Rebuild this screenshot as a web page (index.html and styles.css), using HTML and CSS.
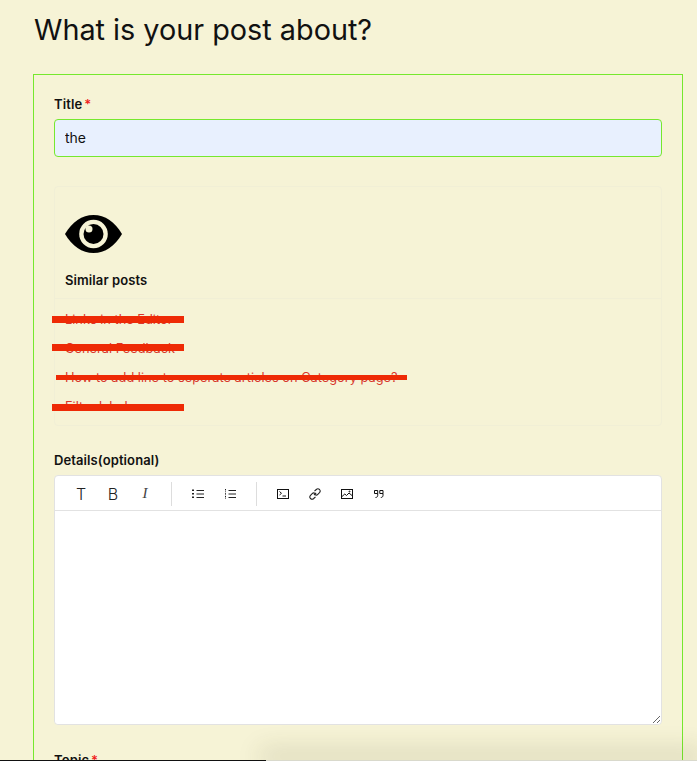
FILE: index.html

```html
<!DOCTYPE html>
<html lang="en">
<head>
    <meta charset="UTF-8">
    <title>New post</title>
    <link rel="stylesheet" href="styles.css">
</head>
<body>
    <h1 class="page-title">What is your post about?</h1>

    <form class="post-form">
        <div class="field">
            <label class="field-label">Title<span class="req">*</span></label>
            <input class="title-input" type="text" value="the">
        </div>

        <div class="similar">
            <div class="similar-head">
                <svg class="eye" viewBox="0 0 57 38" width="57" height="38">
                    <path fill="#000" d="M0 19C7 7 17 0 28.500 0S50 7 57 19C50 31 40 38 28.500 38S7 31 0 19Z"/>
                    <circle cx="28.500" cy="19" r="14.300" fill="#f6f3d6"/>
                    <circle cx="28.500" cy="19" r="10" fill="#000"/>
                    <circle cx="24" cy="14" r="3.500" fill="#f6f3d6"/>
                </svg>
                <div class="similar-title">Similar posts</div>
            </div>
            <ul class="similar-list">
                <li>Links in the Editor<span class="strike strike-short"></span></li>
                <li>General Feedback<span class="strike strike-short"></span></li>
                <li>How to add line to seperate articles on Category page?<span class="strike strike-long"></span></li>
                <li>Filter label<span class="strike strike-short"></span></li>
            </ul>
        </div>

        <div class="field">
            <label class="field-label">Details(optional)</label>
            <div class="editor">
                <div class="toolbar">
                    <div class="tool-group">
                        <span class="tool tool-letter">T</span>
                        <span class="tool tool-letter">B</span>
                        <span class="tool tool-letter tool-italic">I</span>
                    </div>
                    <div class="tool-group">
                        <span class="tool">
                            <svg viewBox="0 0 12 12" width="12" height="12" fill="none" stroke="#222" stroke-width="1">
                                <path d="M4.500 2.500H12M4.500 6H12M4.500 9.500H12"/>
                                <path stroke-width="2" stroke-dasharray="1.400 .9" d="M1 1.500V3.500M1 5V7M1 8.500V10.500"/>
                            </svg>
                        </span>
                        <span class="tool">
                            <svg viewBox="0 0 12 12" width="12" height="12" fill="none" stroke="#222" stroke-width="1">
                                <path d="M4.500 2.500H12M4.500 6H12M4.500 9.500H12"/>
                                <path stroke-dasharray="1 .6" d="M1.500 1V4M1.500 4.800V7.200M1.500 8V11"/>
                            </svg>
                        </span>
                    </div>
                    <div class="tool-group">
                        <span class="tool">
                            <svg viewBox="0 0 12 10" width="12" height="10" fill="none" stroke="#111" stroke-width="1">
                                <rect x=".5" y=".5" width="11" height="9"/>
                                <path d="M2.500 2.500L4.500 4.300L2.500 6M5.500 7H9"/>
                            </svg>
                        </span>
                        <span class="tool">
                            <svg viewBox="0 0 12 12" width="12" height="12" fill="none" stroke="#222" stroke-width="1.100">
                                <path d="M5 7L7.200 4.800"/>
                                <path d="M5.500 3.200L7.300 1.500C8.200.7 9.600.7 10.500 1.500C11.300 2.400 11.300 3.800 10.500 4.700L8.800 6.400C8 7.200 6.800 7.200 6 6.500"/>
                                <path d="M6.500 8.800L4.700 10.500C3.800 11.300 2.400 11.300 1.500 10.500C.7 9.600.7 8.200 1.500 7.300L3.200 5.600C4 4.800 5.200 4.800 6 5.500"/>
                            </svg>
                        </span>
                        <span class="tool">
                            <svg viewBox="0 0 12 10" width="12" height="10" fill="none" stroke="#111" stroke-width="1">
                                <rect x=".5" y=".5" width="11" height="9"/>
                                <path d="M1 7.500L3.800 5L5.500 6.500L8 4L11 6.500"/>
                                <circle cx="8.500" cy="2.500" r=".5"/>
                            </svg>
                        </span>
                        <span class="tool">
                            <svg viewBox="0 0 10 8" width="10" height="8" fill="none" stroke="#111" stroke-width="1">
                                <path d="M.5.500H3.700V3.500H.5ZM3.700 3.500V5.500C3.700 6.500 3 7.500 1.500 7.500"/>
                                <path d="M5.800.500H9V3.500H5.800ZM9 3.500V5.500C9 6.500 8.300 7.500 6.800 7.500"/>
                            </svg>
                        </span>
                    </div>
                </div>
                <textarea class="editor-body"></textarea>
            </div>
        </div>

        <div class="field">
            <label class="field-label">Topic<span class="req">*</span></label>
        </div>
    </form>

    <div class="bottom-bar"></div>
</body>
</html>
```

FILE: styles.css

```css
* {
    box-sizing: border-box;
}
html, body {
    height: 100%;
    overflow: hidden;
}
body {
    margin: 0;
    padding: 0 14px 0 33px;
    background-color: #f6f3d6;
    color: #111;
    font-family: Inter, "Liberation Sans", sans-serif;
}
.page-title {
    margin: 0;
    padding: 12px 0 0 1px;
    height: 74px;
    font-size: 28.800px;
    line-height: 36px;
    font-weight: 400;
}
.post-form {
    border: 1px solid #76e82e;
    padding: 20px 20px 40px;
}
.field-label {
    display: block;
    font-size: 13px;
    line-height: 18px;
    font-weight: 600;
    letter-spacing: 0.1px;
    margin-bottom: 6px;
}
.req {
    color: #f01d1d;
    margin-left: 2px;
}
.title-input {
    display: block;
    width: 100%;
    height: 38px;
    padding: 0 10px 2px;
    border: 1px solid #76e82e;
    border-radius: 4px;
    background: #e8f0fe;
    color: #111;
    font-family: inherit;
    font-size: 14px;
}
.similar {
    margin-top: 29px;
    height: 240px;
    border: 1px solid #f1efd6;
    border-radius: 4px;
}
.similar-head {
    height: 112px;
    padding: 28px 10px 0;
    border-bottom: 1px solid #f1efd6;
}
.eye {
    display: block;
}
.similar-title {
    margin-top: 18px;
    font-size: 13px;
    line-height: 18px;
    font-weight: 600;
    letter-spacing: 0.1px;
}
.similar-list {
    list-style: none;
    margin: 0;
    padding: 12px 10px 0;
}
.similar-list li {
    position: relative;
    height: 29px;
    font-size: 12.800px;
    line-height: 18px;
    color: #d8372c;
}
.strike {
    position: absolute;
    background: #ee2a05;
}
.strike-short {
    left: -13px;
    top: 5px;
    width: 132px;
    height: 7px;
}
.similar-list li:nth-child(2) .strike {
    top: 4px;
}
.similar-list li:nth-child(4) .strike {
    top: 6px;
}
.strike-long {
    left: -9px;
    top: 6px;
    width: 351px;
    height: 5px;
}
.similar + .field {
    margin-top: 25px;
}
.editor {
    display: flex;
    flex-direction: column;
    height: 250px;
    background: #fff;
    border: 1px solid #e2e2e2;
    border-radius: 4px;
}
.toolbar {
    display: flex;
    align-items: center;
    height: 35px;
    flex-shrink: 0;
    padding: 1px 0 0 10px;
    border-bottom: 1px solid #e2e2e2;
}
.tool-group {
    display: flex;
    height: 24px;
    padding-right: 10px;
    margin-right: 10px;
    border-right: 1px solid #ddd;
}
.tool-group:last-child {
    border-right: none;
}
.tool {
    display: flex;
    align-items: center;
    justify-content: center;
    width: 32px;
    height: 24px;
}
.tool-letter {
    font-size: 16px;
    font-weight: 300;
    color: #222;
}
.tool-italic {
    font-family: "Liberation Serif", serif;
    font-size: 15px;
    font-style: italic;
    color: #444;
}
.editor-body {
    flex: 1;
    display: block;
    width: 100%;
    border: none;
    border-radius: 0 0 4px 4px;
    outline: none;
    background: #fff;
}
.post-form > .field:last-child {
    margin-top: 26px;
}
.bottom-bar {
    position: fixed;
    left: 0;
    right: 0;
    bottom: 0;
    height: 1px;
    background: linear-gradient(to right, #111 266px, #d9d9cc 266px);
}
.bottom-bar::before {
    content: "";
    position: absolute;
    left: 266px;
    right: 0;
    top: 0;
    height: 1px;
    box-shadow: 0 -4px 24px 6px rgba(60, 60, 20, 0.18);
}
```
